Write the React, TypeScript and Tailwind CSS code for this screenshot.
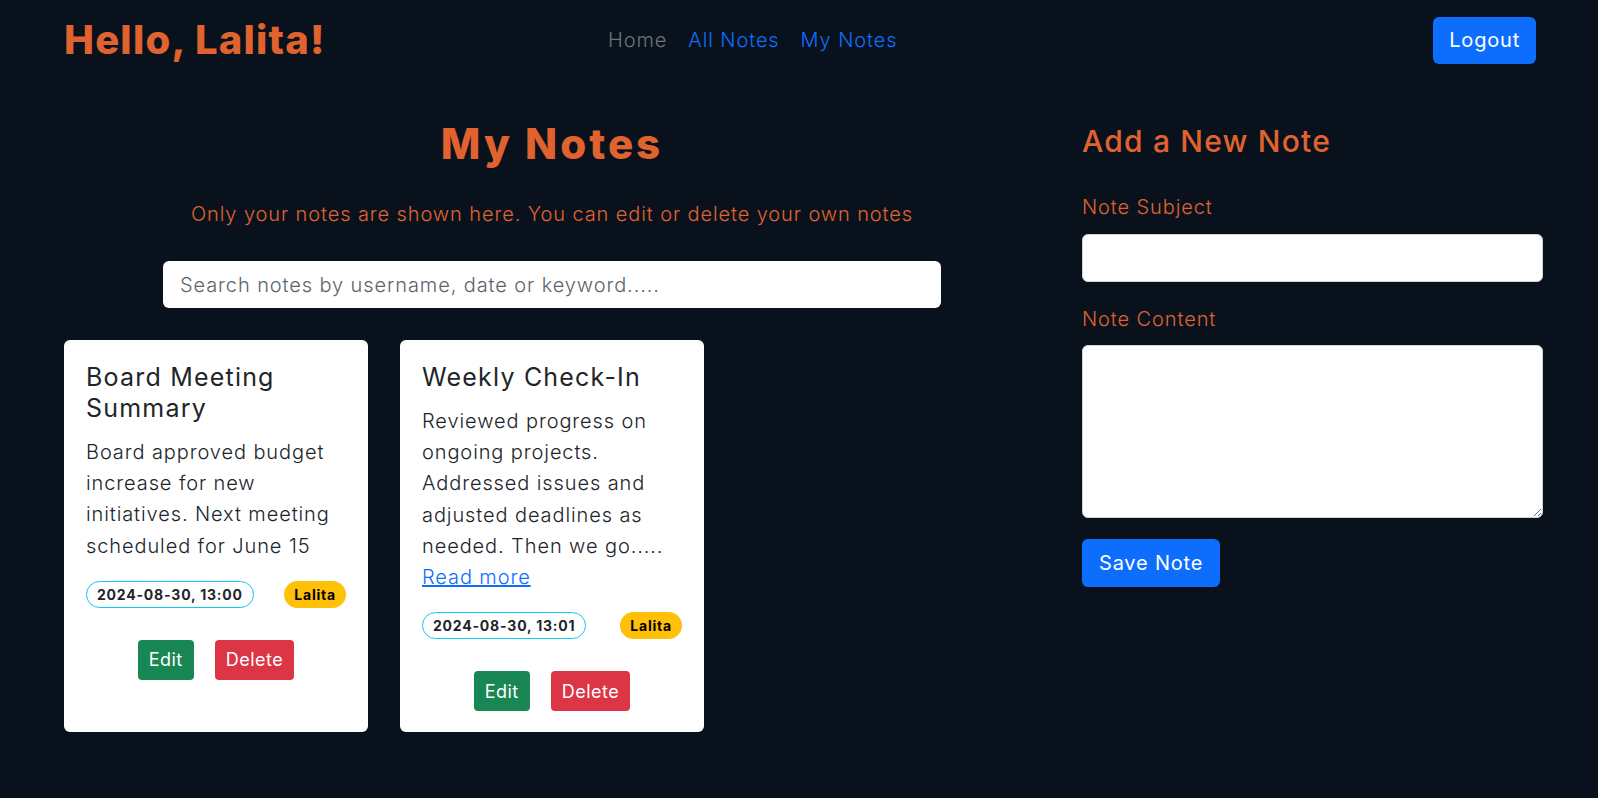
import React from "react";

const orange = "text-[#e0632f]";

type Note = {
  title: string;
  body: string;
  date: string;
  user: string;
  more?: boolean;
};

const notes: Note[] = [
  {
    title: "Board Meeting Summary",
    body: "Board approved budget increase for new initiatives. Next meeting scheduled for June 15",
    date: "2024-08-30, 13:00",
    user: "Lalita",
  },
  {
    title: "Weekly Check-In",
    body: "Reviewed progress on ongoing projects. Addressed issues and adjusted deadlines as needed. Then we go.....",
    date: "2024-08-30, 13:01",
    user: "Lalita",
    more: true,
  },
];

const NoteCard = ({ note }: { note: Note }) => {
  return (
    <div className="flex flex-col rounded-[6px] bg-white px-[22px] pt-[22px] pb-[21px] text-[#212529]">
      <h5 className="mb-[13px] text-[25px] leading-[31px] font-normal tracking-[1.2px]">{note.title}</h5>
      <p className="text-[20px] leading-[31.2px] font-light tracking-[0.9px]">
        {note.body}
        {note.more && (
          <>
            <br />
            <a href="#" className="text-[#0d6efd] underline">
              Read more
            </a>
          </>
        )}
      </p>
      <div className="mt-[19px] flex items-center justify-between">
        <span className="rounded-full border border-[#0dcaf0] px-[10px] text-[14px] leading-[25px] font-bold tracking-[0.8px]">
          {note.date}
        </span>
        <span className="rounded-full bg-[#ffc107] px-[10px] text-[14px] leading-[27px] font-bold tracking-[0.8px] text-black">
          {note.user}
        </span>
      </div>
      <div className="mt-[32px] flex justify-center gap-[21px]">
        <button className="h-[40px] rounded-[4px] bg-[#198754] px-[11px] text-[18px] tracking-[0.5px] text-white">Edit</button>
        <button className="h-[40px] rounded-[4px] bg-[#dc3545] px-[11px] text-[18px] tracking-[0.5px] text-white">Delete</button>
      </div>
    </div>
  );
};

const App = () => {
  return (
    <div className="min-h-screen bg-[#09121c] font-['Inter',sans-serif]">
      <nav className="flex h-[80px] items-center pl-[64px] pr-[62px]">
        <h1 className={`w-[544px] text-[40px] font-extrabold tracking-[1.2px] ${orange}`}>Hello, Lalita!</h1>
        <div className="flex gap-[21px] text-[20px] font-light tracking-[0.9px]">
          <a href="#" className="text-[#6c757d]">Home</a>
          <a href="#" className="text-[#0d6efd]">All Notes</a>
          <a href="#" className="text-[#0d6efd]">My Notes</a>
        </div>
        <button className="ml-auto h-[47px] rounded-[6px] bg-[#0d6efd] px-[16px] text-[20px] tracking-[0.8px] text-white">Logout</button>
      </nav>

      <div className="flex gap-[42px] pl-[64px]">
        <div className="w-[976px]">
          <h2 className={`mt-[40px] text-center text-[42px] leading-[48px] font-extrabold tracking-[3px] ${orange}`}>My Notes</h2>
          <p className={`mt-[31px] text-center text-[20px] font-light tracking-[0.9px] ${orange}`}>
            Only your notes are shown here. You can edit or delete your own notes
          </p>
          <div className="mt-[32px] flex justify-center">
            <input
              className="h-[47px] w-[778px] rounded-[6px] bg-white px-[17px] text-[20px] font-light tracking-[0.9px] placeholder:text-[#5c636a] outline-none"
              placeholder="Search notes by username, date or keyword....."
            />
          </div>
          <div className="mt-[32px] grid grid-cols-3 gap-8">
            {notes.map((n) => (
              <NoteCard key={n.title} note={n} />
            ))}
          </div>
        </div>

        <div className="w-[461px]">
          <h3 className={`mt-[43px] text-[30px] leading-[36px] font-medium tracking-[1.2px] ${orange}`}>Add a New Note</h3>
          <label className={`mt-[33px] block text-[20px] font-light tracking-[0.9px] ${orange}`}>Note Subject</label>
          <input className="mt-[12px] block h-[48px] w-full rounded-[6px] border border-[#ced4da] bg-white px-[12px] outline-none" />
          <label className={`mt-[22px] block text-[20px] font-light tracking-[0.9px] ${orange}`}>Note Content</label>
          <textarea className="mt-[11px] block h-[173px] w-full rounded-[6px] border border-[#ced4da] bg-white px-[12px] outline-none" />
          <button className="mt-[21px] h-[48px] rounded-[6px] bg-[#0d6efd] px-[17px] text-[20px] tracking-[0.8px] text-white">Save Note</button>
        </div>
      </div>
    </div>
  );
};

export default App;
